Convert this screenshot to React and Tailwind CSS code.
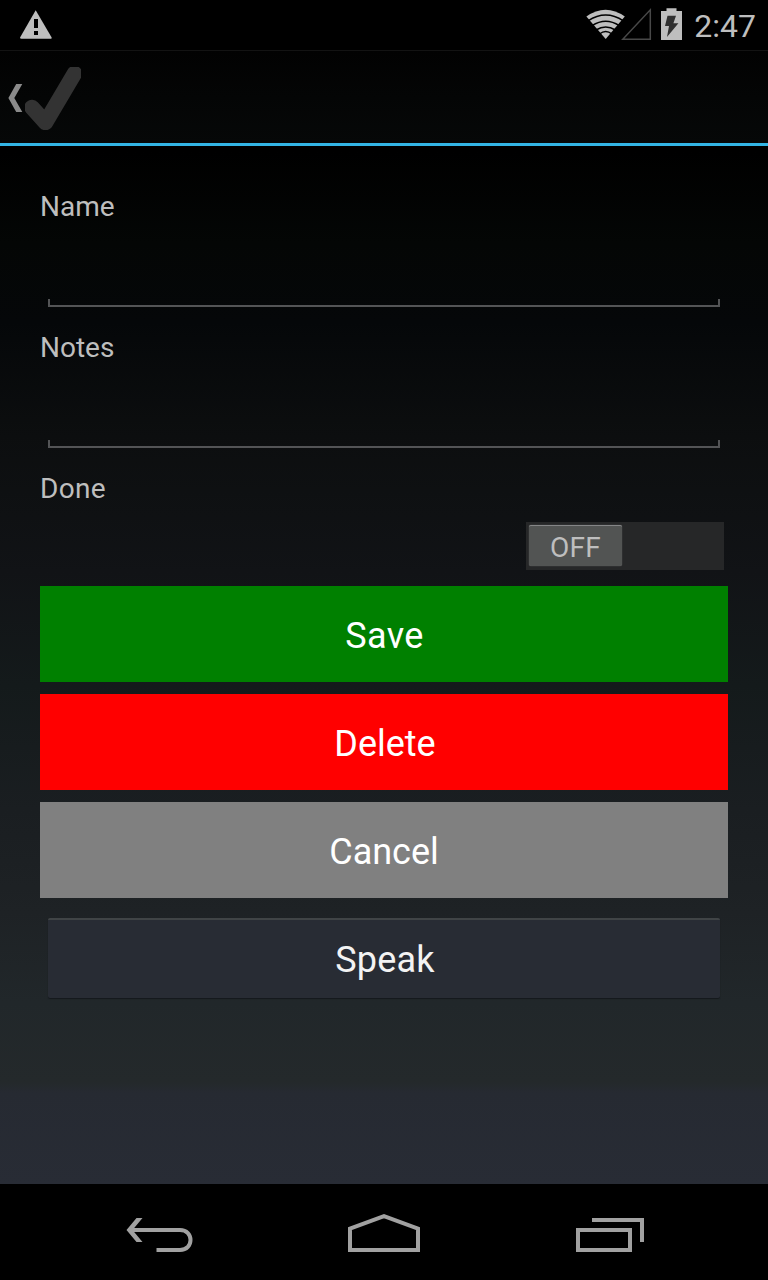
import React from 'react';

function StatusBar() {
  return (
    <header className="flex h-[50px] items-start justify-between bg-black text-[#bebebe]">
      <svg className="ml-5 mt-[10px]" width="32" height="29" viewBox="0 0 32 29">
        <path d="M15.7 0.3 31.5 27.2Q32 28.8 30.5 28.8H1.3Q-0.3 28.8 0.2 27.2Z" fill="currentColor" />
        <path d="M14 9h4v9h-4zM14 21h4v4h-4z" fill="#000" />
      </svg>
      <div className="flex items-start">
        <svg width="96" height="44" viewBox="586 0 96 44">
          <path d="M586.4 16.5Q605.5 3 624.8 16.5L605.7 39Z" fill="currentColor" />
          <g fill="none" stroke="#000" strokeWidth="1.5">
            <path d="M588 20.8Q605.7 9.3 623.4 20.8" />
            <path d="M592 25.6Q605.7 16.8 619.4 25.6" />
            <path d="M596 30Q605.7 24 615.4 30" />
            <path d="M599.5 34Q605.7 29.2 611.9 34" />
          </g>
          <path d="M622.8 39.2 650.3 9.8V39.2Z" fill="none" stroke="#484848" strokeWidth="1.5" />
          <path d="M661 11h5.5V8.2h10V11h5.5v29h-21Z" fill="currentColor" />
          <path d="M667.5 15.8h8.5l-2.6 7.5h5L667 37l2-11h-4Z" fill="#303030" />
        </svg>
        <span className="ml-[12px] mr-[12px] mt-[7px] text-[32px] leading-[38px]">2:47</span>
      </div>
    </header>
  );
}

function ActionBar() {
  return (
    <div className="flex h-24 items-start border-b-[3px] border-t border-b-[#33b5e5] border-t-[#131313] bg-linear-to-b/srgb from-[#020202] to-[#060808]">
      <svg className="ml-2 mt-[33px]" width="15" height="28" viewBox="0 0 15 28">
        <path d="M8.2 0H14.3L6.3 14 14.3 28H8.2L0.4 14Z" fill="#8a8a8a" />
      </svg>
      <svg className="ml-[2px] mt-4" width="56" height="63" viewBox="0 0 56 63">
        <path d="M7 40.5 20.5 55.5 49.5 6.5" fill="none" stroke="#333" strokeWidth="15.5" strokeLinecap="round" strokeLinejoin="round" />
      </svg>
    </div>
  );
}

function Field({ label }) {
  return (
    <label className="block h-[141px]">
      <span className="block text-[28px] leading-[38px] text-[#bebebe]">{label}</span>
      <input className="mx-2 mt-[25px] block h-12 w-[672px] bg-transparent px-2 text-[36px] text-white outline-none" />
      <span className="mx-2 block h-2 border-x-2 border-b-2 border-[#535456]" />
    </label>
  );
}

function ActionButton({ children, className }) {
  return (
    <button className={`block h-24 w-full pt-[3px] text-[36px] leading-[42px] text-white ${className}`}>{children}</button>
  );
}

function NavigationBar() {
  return (
    <nav className="flex h-24 items-start bg-black pl-[126px] text-[#a1a1a1]">
      <svg className="mt-[33px]" width="67" height="36" viewBox="126 1217 67 36" fill="none" stroke="currentColor" strokeWidth="4">
        <path d="M131 1230H180C194 1230 194 1250 180 1250H156.5" />
        <path d="M136.5 1218H142.5L132.5 1230 142.5 1242H136.5L126.5 1230Z" fill="currentColor" stroke="none" />
      </svg>
      <svg className="ml-[154px] mt-[29px]" width="74" height="40" viewBox="347 1213 74 40" fill="none" stroke="currentColor" strokeWidth="4">
        <path d="M350 1228.7 384 1216.2 418 1228.7V1250H350Z" />
      </svg>
      <svg className="ml-[154px] mt-[33px]" width="71" height="36" viewBox="575 1217 71 36" fill="none" stroke="currentColor" strokeWidth="4">
        <path d="M578 1230H630V1250H578ZM592 1220H642V1242" />
      </svg>
    </nav>
  );
}

export default function App() {
  return (
    <div className="flex h-[1280px] w-[768px] flex-col bg-black font-[Roboto,sans-serif]">
      <StatusBar />
      <div className="flex flex-1 flex-col bg-[linear-gradient(#000_0%,#000_9%,#040605_17%,#050709_24%,#0c0e0f_34%,#111316_46%,#141a1b_56%,#1a1e21_67%,#1e2225_76%,#21272a_84%,#24292b_91%,#262a32_92%,#282c35_100%)]">
        <ActionBar />
        <main className="flex-1 px-10 pt-[42px]">
          <Field label="Name" />
          <Field label="Notes" />
          <div className="text-[28px] leading-[38px] tracking-[0.3px] text-[#bebebe]">Done</div>
          <div className="mr-1 mt-[14px] flex justify-end">
            <button className="flex h-12 w-[198px] items-start bg-[#262728] pl-[3px] pt-[3px]">
              <span className="h-[41px] w-[93px] rounded-[2px] border-t border-t-[#858687] bg-[#525453] pt-[3px] text-[28px] leading-[38px] tracking-[0.2px] text-[#bebebe] shadow-[0_0_1px_#777]">OFF</span>
            </button>
          </div>
          <div className="mt-4 flex flex-col gap-3">
            <ActionButton className="bg-[#008000] pl-px tracking-[0.4px]">Save</ActionButton>
            <ActionButton className="bg-[#ff0000] pl-[2px]">Delete</ActionButton>
            <ActionButton className="bg-[#808080]">Cancel</ActionButton>
          </div>
          <button className="mx-2 mt-5 block h-[80px] w-[672px] rounded-[2px] border-t-2 border-t-[#404446] bg-[#282c34] pl-[2px] pt-[2px] text-[36px] leading-[42px] tracking-[0.2px] text-[#f3f3f3] shadow-[0_1px_1px_#15191c]">Speak</button>
        </main>
      </div>
      <NavigationBar />
    </div>
  );
}
